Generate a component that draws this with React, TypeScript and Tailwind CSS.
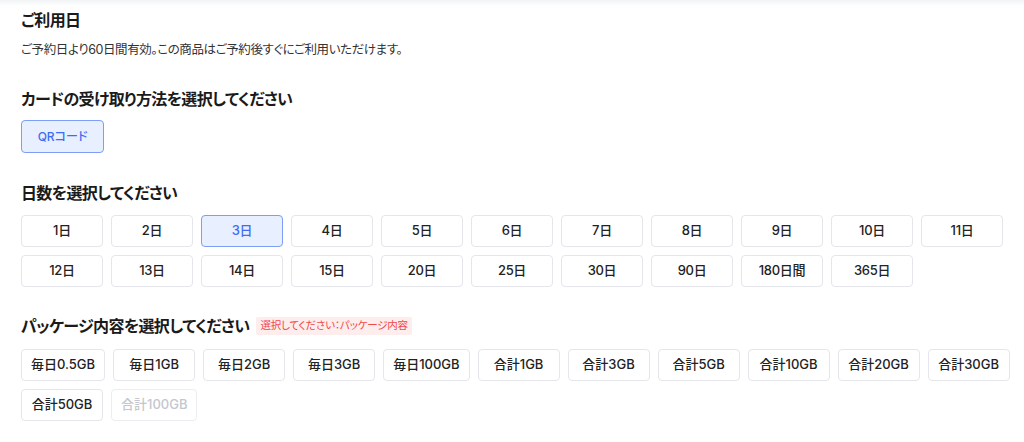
const days = ["1日", "2日", "3日", "4日", "5日", "6日", "7日", "8日", "9日", "10日", "11日", "12日", "13日", "14日", "15日", "20日", "25日", "30日", "90日", "180日間", "365日"];

const packages = ["毎日0.5GB", "毎日1GB", "毎日2GB", "毎日3GB", "毎日100GB", "合計1GB", "合計3GB", "合計5GB", "合計10GB", "合計20GB", "合計30GB", "合計50GB", "合計100GB"];

const font = { fontFamily: 'Inter, "Noto Sans CJK JP", sans-serif' };

function Option({ label, selected, disabled, fixed }: { label: string; selected?: boolean; disabled?: boolean; fixed?: boolean }) {
  const base = "h-8 flex items-center justify-center rounded-[4px] border font-medium";
  const size = fixed ? "w-[82px] text-[13px] tracking-[-0.3px]" : "min-w-[82px] px-[9px] text-[13px]";
  const tone = selected
    ? "bg-[#e8efff] border-[#7d9df6] text-[#3f6cf4]"
    : disabled
      ? "bg-white border-[#ebedf0] text-[#c3c7cf]"
      : "bg-white border-[#e4e6eb] text-[#222]";
  return <div className={`${base} ${size} ${tone}`}>{label}</div>;
}

function Heading({ children }: { children: string }) {
  return <h2 className="text-[16px] leading-6 font-bold tracking-[-0.65px] text-[#1a1a1a]">{children}</h2>;
}

export default function App() {
  return (
    <div className="w-[1024px] h-[442px] bg-white relative overflow-hidden [font-feature-settings:'palt']" style={font}>
      <div className="absolute top-0 left-0 w-full h-[6px] bg-linear-to-b from-[#f2f3f5] to-white"></div>

      <div className="relative px-[21px] pt-[8px]">
        <Heading>ご利用日</Heading>
        <p className="mt-2 text-[12.5px] leading-5 tracking-[-0.4px] text-[#333]">ご予約日より60日間有効。この商品はご予約後すぐにご利用いただけます。</p>

        <div className="mt-[27px]">
          <Heading>カードの受け取り方法を選択してください</Heading>
        </div>
        <div className="mt-[9px] flex">
          <div className="h-[33px] w-[83px] flex items-center justify-center rounded-[4px] border border-[#7d9df6] bg-[#e8efff] text-[12px] font-medium text-[#3f6cf4]">
            QRコード
          </div>
        </div>

        <div className="mt-[28px]">
          <Heading>日数を選択してください</Heading>
        </div>
        <div className="mt-[10px] grid grid-cols-[repeat(11,82px)] gap-2">
          {days.map((d) => (
            <Option key={d} label={d} selected={d === "3日"} fixed />
          ))}
        </div>

        <div className="mt-[27px] flex items-center gap-[7px]">
          <Heading>パッケージ内容を選択してください</Heading>
          <span className="h-[18px] px-1 flex items-center rounded-[2px] bg-[#fdeded] text-[10.5px] tracking-[-0.2px] text-[#f04848]">
            選択してください：パッケージ内容
          </span>
        </div>
        <div className="mt-[11px] flex flex-wrap gap-2 w-[995px]">
          {packages.map((p) => (
            <Option key={p} label={p} disabled={p === "合計100GB"} />
          ))}
        </div>
      </div>
    </div>
  );
}
